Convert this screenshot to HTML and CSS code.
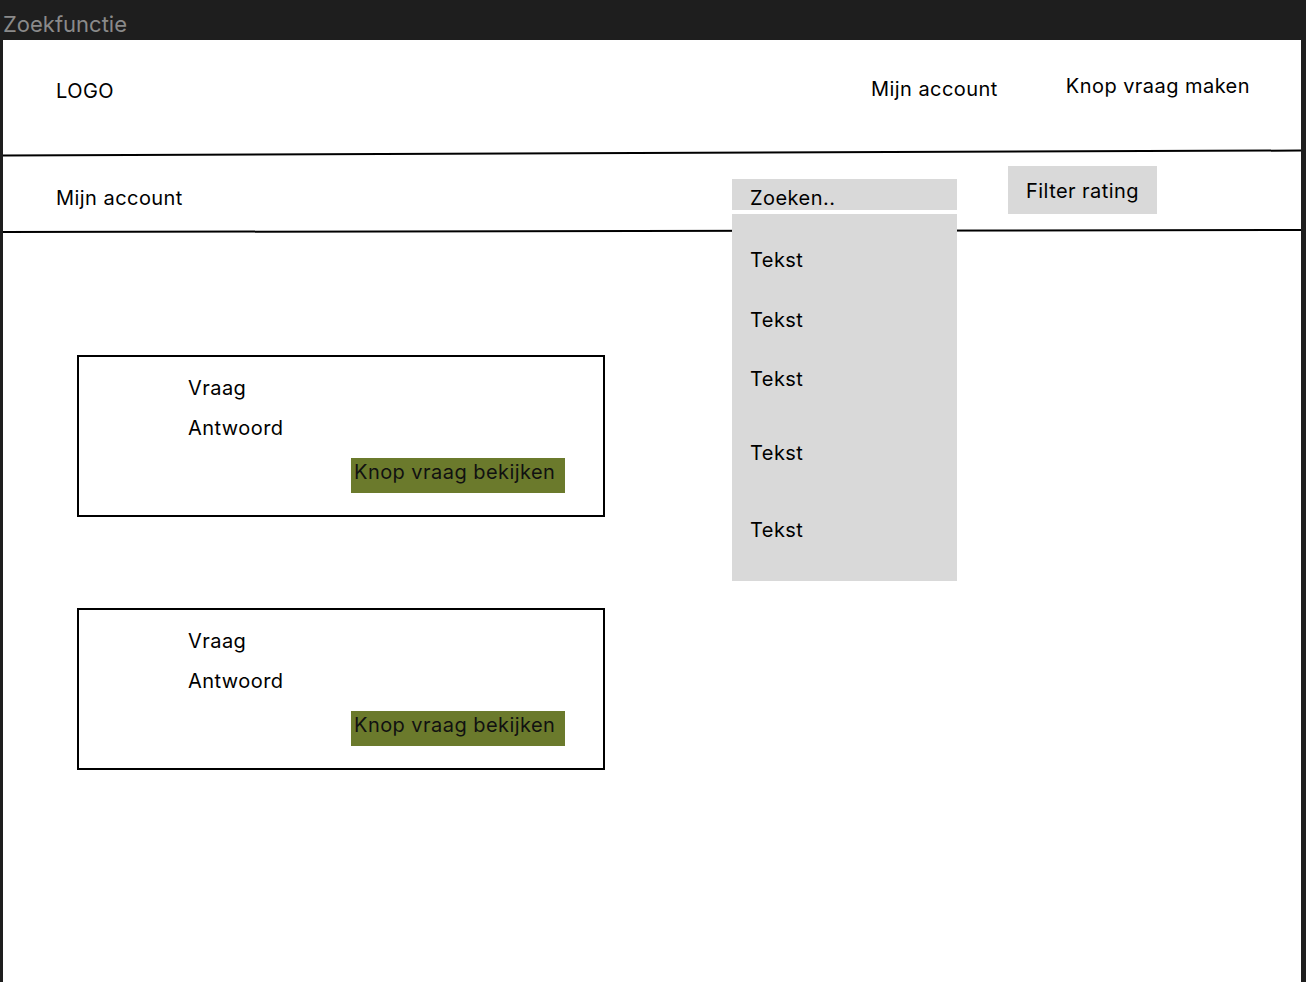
FILE: index.html
```html
<!DOCTYPE html>
<html lang="nl">
<head>
<meta charset="utf-8">
<title>Zoekfunctie</title>
<link rel="stylesheet" href="styles.css">
</head>
<body>
  <div class="title">Zoekfunctie</div>
  <div class="frame">
    <header class="topbar">
      <div class="logo">LOGO</div>
      <div class="spacer"></div>
      <div class="nav-account">Mijn account</div>
      <div class="nav-create">Knop vraag maken</div>
    </header>
    <div class="rule rule-one"></div>
    <div class="subbar">
      <div class="sub-account">Mijn account</div>
      <div class="search">
        <div class="search-box">Zoeken..</div>
        <div class="dropdown">
          <div class="opt opt-1">Tekst</div>
          <div class="opt opt-2">Tekst</div>
          <div class="opt opt-3">Tekst</div>
          <div class="opt opt-4">Tekst</div>
          <div class="opt opt-5">Tekst</div>
        </div>
      </div>
      <div class="filter">Filter rating</div>
    </div>
    <div class="rule rule-two"></div>
    <main class="list">
      <section class="card">
        <div class="q">Vraag</div>
        <div class="a">Antwoord</div>
        <div class="btn">Knop vraag bekijken</div>
      </section>
      <section class="card">
        <div class="q">Vraag</div>
        <div class="a">Antwoord</div>
        <div class="btn">Knop vraag bekijken</div>
      </section>
    </main>
  </div>
</body>
</html>
```

FILE: styles.css
```css
* { box-sizing: border-box; }
html, body { margin: 0; padding: 0; }
body {
  background: #1e1e1e;
  font-family: Inter, "Noto Sans", sans-serif;
  color: #000;
  width: 1306px;
  height: 982px;
  overflow: hidden;
}
.title {
  height: 40px;
  padding: 10px 0 0 3px;
  font-size: 22px;
  line-height: 28px;
  color: #8a8a8a;
}
.frame {
  margin-left: 3px;
  width: 1298px;
  height: 942px;
  background: #fff;
  position: relative;
  font-size: 20px;
  line-height: 24px;
  letter-spacing: 0.45px;
}
.topbar {
  display: flex;
  align-items: flex-start;
  height: 112px;
}
.logo { margin: 39px 0 0 53px; }
.spacer { flex: 1; }
.nav-account { margin-top: 37px; }
.nav-create { margin: 34px 51px 0 68px; }
.rule {
  height: 2px;
  background: #000;
}
.rule-one { transform: rotate(-0.22deg); }
.rule-two { transform: rotate(-0.09deg); }
.subbar {
  display: flex;
  align-items: flex-start;
  height: 76px;
  position: relative;
  z-index: 2;
}
.sub-account { margin: 32px 0 0 53px; width: 676px; }
.search {
  position: relative;
  width: 225px;
  margin-top: 25px;
}
.search-box {
  height: 31px;
  background: #d9d9d9;
  padding: 7px 0 0 18px;
}
.dropdown {
  position: absolute;
  top: 35px;
  left: 0;
  width: 225px;
  height: 367px;
  background: #d9d9d9;
}
.opt {
  position: absolute;
  left: 18px;
}
.opt-1 { top: 34px; }
.opt-2 { top: 94px; }
.opt-3 { top: 153px; }
.opt-4 { top: 227px; }
.opt-5 { top: 304px; }
.filter {
  margin: 12px 0 0 51px;
  width: 149px;
  height: 48px;
  background: #d9d9d9;
  padding: 13px 0 0 18px;
}
.list {
  display: flex;
  flex-direction: column;
  gap: 91px;
  padding: 123px 0 0 74px;
}
.card {
  width: 528px;
  height: 162px;
  border: 2px solid #000;
  padding: 19px 0 0 109px;
}
.a { margin-top: 16px; }
.btn {
  margin: 18px 0 0 163px;
  width: 214px;
  height: 35px;
  background: #6b7a2c;
  padding: 2px 0 0 3px;
  color: #111;
}
```
